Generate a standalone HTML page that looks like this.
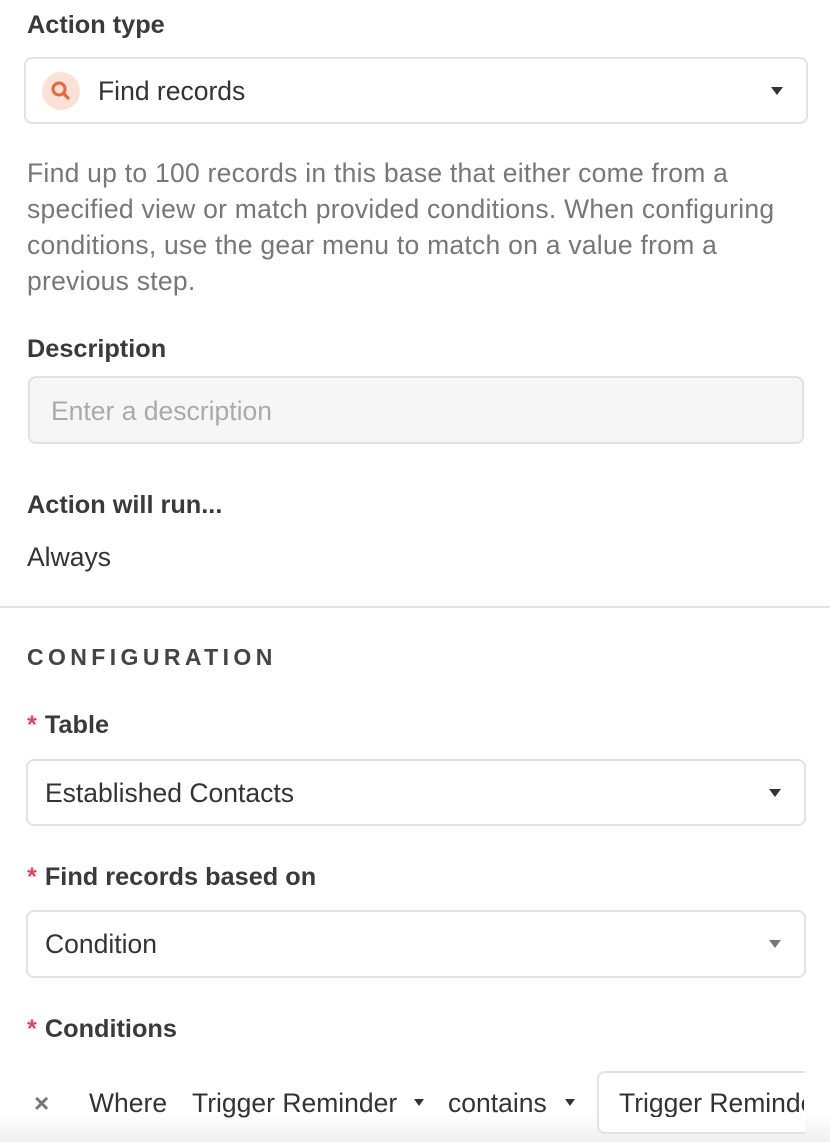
<!DOCTYPE html>
<html><head><style>
body{margin:0;width:830px;height:1142px;background:#fff;position:relative;overflow:hidden;font-family:"Liberation Sans",sans-serif;color:#333}
.a{position:absolute;white-space:nowrap;line-height:28px}
.lbl{font-size:25.3px;font-weight:bold;color:#3a3a3a}
.box{position:absolute;border:2px solid #e2e2e2;border-radius:8px;box-sizing:border-box;background:#fff}
.tri{position:absolute;width:0;height:0;border-left:6px solid transparent;border-right:6px solid transparent;border-top:8px solid #333}
.req{color:#e8405e;font-weight:bold;margin-right:8px}
.t{font-size:26.5px;color:#333}
</style></head><body>
<div class="a lbl" style="left:27px;top:11px">Action type</div>
<div class="box" style="left:24px;top:57px;width:784px;height:67px"></div>
<div style="position:absolute;left:42px;top:72px;width:38px;height:38px;border-radius:50%;background:#fbe1d6"></div>
<svg style="position:absolute;left:42px;top:72px" width="38" height="38" viewBox="0 0 38 38"><circle cx="17" cy="17" r="6" fill="none" stroke="#e5673f" stroke-width="3"/><line x1="21.5" y1="21.5" x2="26" y2="26" stroke="#e5673f" stroke-width="3.2" stroke-linecap="round"/></svg>
<div class="a t" style="left:98px;top:77px">Find records</div>
<div class="tri" style="left:771px;top:87px"></div>
<div class="a" style="left:27px;top:155px;font-size:26.5px;letter-spacing:0.25px;color:#777;line-height:36px">Find up to 100 records in this base that either come from a<br>specified view or match provided conditions. When configuring<br>conditions, use the gear menu to match on a value from a<br>previous step.</div>
<div class="a lbl" style="left:27px;top:335px">Description</div>
<div class="box" style="left:28px;top:376px;width:776px;height:68px;background:#f6f6f6"></div>
<div class="a t" style="left:51px;top:397px;color:#aaa">Enter a description</div>
<div class="a lbl" style="left:27px;top:491px">Action will run...</div>
<div class="a t" style="left:27px;top:543px">Always</div>
<div style="position:absolute;left:0;top:606px;width:830px;height:2px;background:#e4e4e4"></div>
<div class="a" style="left:27px;top:643px;font-size:23px;font-weight:bold;letter-spacing:4.4px;color:#444">CONFIGURATION</div>
<div class="a lbl" style="left:27px;top:711px"><span class="req">*</span>Table</div>
<div class="box" style="left:26px;top:759px;width:780px;height:67px"></div>
<div class="a t" style="left:45px;top:779px">Established Contacts</div>
<div class="tri" style="left:769px;top:789px"></div>
<div class="a lbl" style="left:27px;top:863px"><span class="req">*</span>Find records based on</div>
<div class="box" style="left:26px;top:910px;width:780px;height:68px"></div>
<div class="a t" style="left:45px;top:930px">Condition</div>
<div class="tri" style="left:769px;top:940px;border-top-color:#777"></div>
<div class="a lbl" style="left:27px;top:1015px"><span class="req">*</span>Conditions</div>
<div style="position:absolute;left:0;top:1060px;width:830px;height:82px;background:linear-gradient(#fff 0%,#fff 65%,#f0f0f0 100%)"></div>
<div class="a" style="left:34px;top:1089px;font-size:26px;color:#777;font-weight:bold">×</div>
<div class="a t" style="left:89px;top:1089px">Where</div>
<div class="a t" style="left:192px;top:1089px">Trigger Reminder</div>
<div class="tri" style="left:414px;top:1099px;border-left-width:5px;border-right-width:5px;border-top-width:7px"></div>
<div class="a t" style="left:448px;top:1089px">contains</div>
<div class="tri" style="left:565px;top:1099px;border-left-width:5px;border-right-width:5px;border-top-width:7px"></div>
<div style="position:absolute;left:597px;top:1071px;width:220px;height:63px;border:2px solid #e2e2e2;border-right:none;border-radius:8px 0 0 8px;box-sizing:border-box;background:#fff"></div>
<div class="a t" style="left:619px;top:1089px;width:185px;overflow:hidden">Trigger Reminder</div>
<div style="position:absolute;left:805px;top:1060px;width:25px;height:82px;background:linear-gradient(#fff 65%,#f0f0f0)"></div>
</body></html>
